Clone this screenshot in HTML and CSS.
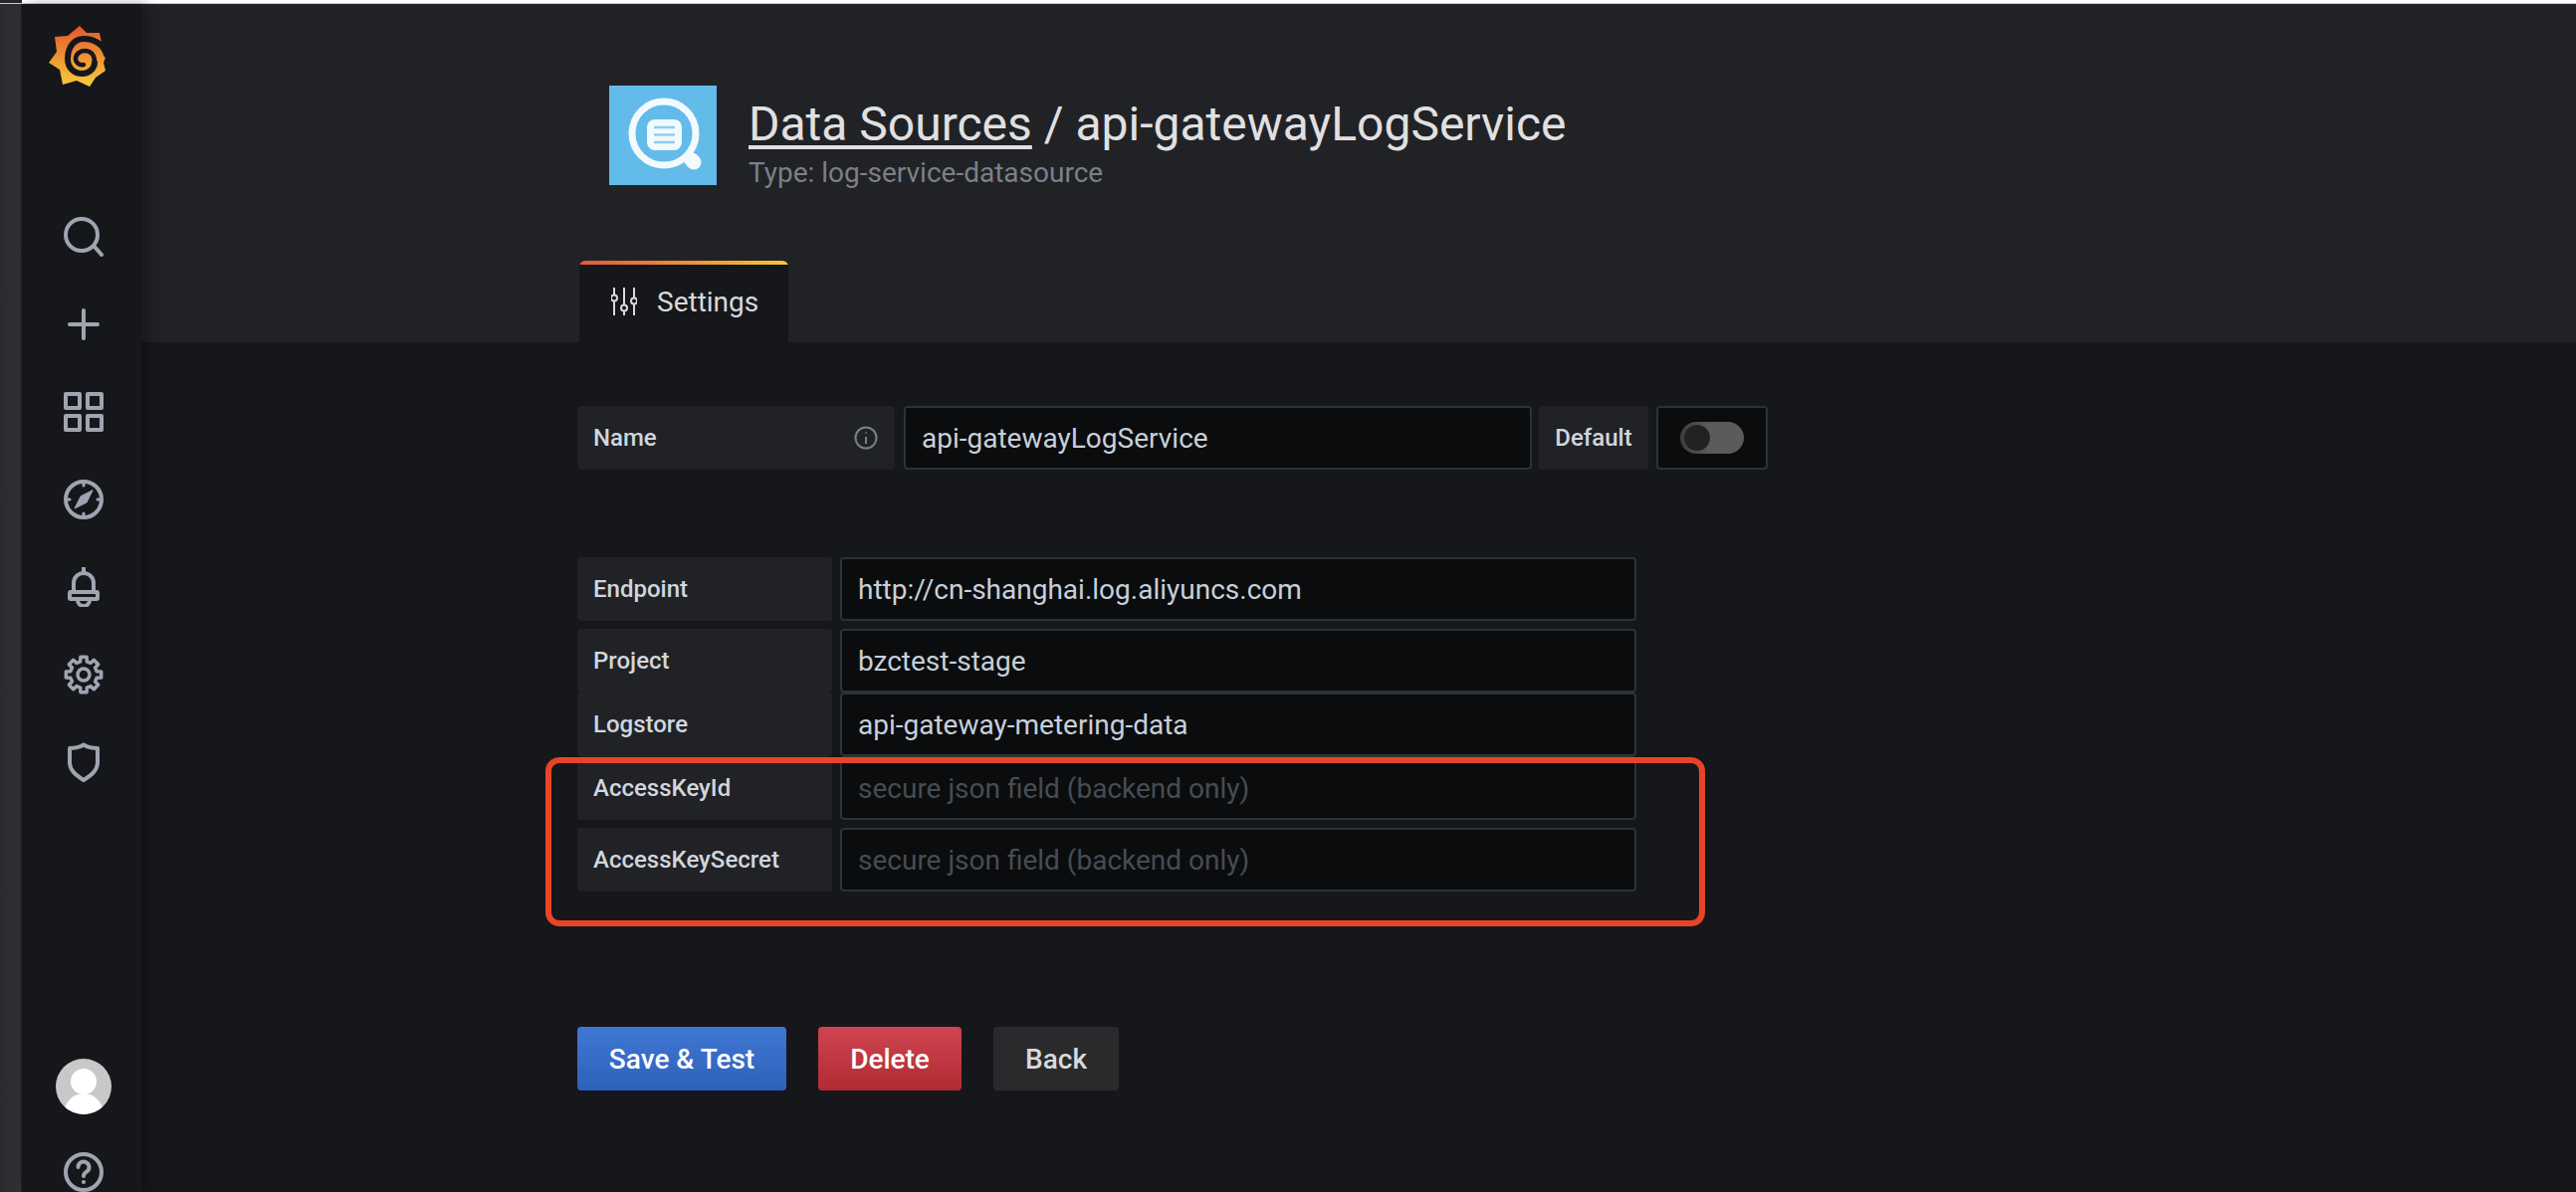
FILE: index.html
```html
<!DOCTYPE html>
<html lang="en">
<head>
  <meta charset="UTF-8" />
  <title>Data Sources / api-gatewayLogService</title>
  <link rel="stylesheet" href="styles.css">
</head>
<body>
  <div class="topline"></div>
  <div class="app">
    <div class="edge"></div>

    <nav class="sidebar">
      <div class="logo">
        <svg width="60" height="64" viewBox="0 0 60 64">
          <defs>
            <linearGradient id="sun" x1="0" y1="0" x2="0" y2="1">
              <stop offset="0" stop-color="#e2582f" />
              <stop offset="1" stop-color="#f8cc3a" />
            </linearGradient>
          </defs>
          <polygon fill="url(#sun)" points="31,1 38,8 51,8 53,18 58,30 55,38 57,46 47,53 41,62 28,56 14,60 11,45 0,38 8,27 6,12 19,11" />
          <path class="spiral" d="M58 30 C55 19 45 14 35 14 C25 14 19 23 19 34 C19 44 26 49 34 49 C40 49 46 44 46 38" />
          <path class="spiral thin" d="M46 37 C46 30 42 26 36 26 C31 26 27 30 27 34 C27 38 31 41 35 40" />
        </svg>
      </div>

      <a class="nav-item"><svg class="nav-icon" viewBox="0 0 40 40"><circle cx="18" cy="18" r="16" /><line x1="31" y1="30" x2="38" y2="38" /></svg></a>
      <a class="nav-item"><svg class="nav-icon" viewBox="0 0 40 40"><line x1="6" y1="20" x2="34" y2="20" /><line x1="20" y1="6" x2="20" y2="34" /></svg></a>
      <a class="nav-item"><svg class="nav-icon" viewBox="0 0 40 40"><rect x="2" y="2" width="14" height="14" /><rect x="24" y="2" width="14" height="14" /><rect x="2" y="24" width="14" height="14" /><rect x="24" y="24" width="14" height="14" /></svg></a>
      <a class="nav-item"><svg class="nav-icon" viewBox="0 0 40 40"><circle cx="20" cy="20" r="18" /><path class="ticks" d="M20 3v3M20 34v3M3 20h3M34 20h3" /><path class="solid" d="M29 11 L23 23 L11 29 L17 17 Z" /></svg></a>
      <a class="nav-item"><svg class="nav-icon" viewBox="0 0 40 40"><path d="M20 1v4M10 25V16a10 10 0 0 1 20 0v9" /><rect x="6" y="25" width="28" height="7" rx="1" /><path d="M14 33a6 6 0 0 0 12 0" /></svg></a>
      <a class="nav-item"><svg class="nav-icon gear" viewBox="0 0 40 40"><polygon points="16.7,6.9 16.9,2.3 23.1,2.3 23.3,6.9 27,8.4 30.3,5.3 34.7,9.7 31.6,13 33.1,16.7 37.7,16.9 37.7,23.1 33.1,23.3 31.6,27 34.7,30.3 30.3,34.7 27,31.6 23.3,33.1 23.1,37.7 16.9,37.7 16.7,33.1 13,31.6 9.7,34.7 5.3,30.3 8.4,27 6.9,23.3 2.3,23.1 2.3,16.9 6.9,16.7 8.4,13 5.3,9.7 9.7,5.3 13,8.4" /><circle cx="20" cy="20" r="6" /></svg></a>
      <a class="nav-item"><svg class="nav-icon" viewBox="0 0 40 40"><path d="M6 6 C11 6 16 5 20 2.500 C24 5 29 6 34 6 V20 C34 28 28 33 20 38 C12 33 6 28 6 20 Z" /></svg></a>

      <div class="nav-spacer"></div>

      <a class="nav-item avatar-item">
        <svg width="56" height="56" viewBox="0 0 56 56">
          <clipPath id="round"><circle cx="28" cy="28" r="28" /></clipPath>
          <g clip-path="url(#round)">
            <rect width="56" height="56" fill="#c8c8c8" />
            <circle cx="28" cy="23" r="13" fill="#fff" />
            <ellipse cx="28" cy="56" rx="20" ry="21" fill="#fff" />
          </g>
        </svg>
      </a>
      <a class="nav-item help-item"><svg class="nav-icon" viewBox="0 0 40 40"><circle cx="20" cy="20" r="18" /><path d="M14.500 15a5.500 5.500 0 1 1 8.500 4.600c-2 1.300-3 2-3 4.400" /><path d="M20 30v0.100" /></svg></a>
    </nav>

    <main class="main">
      <header class="page-header">
        <div class="title-row">
          <svg class="ds-icon" width="108" height="100" viewBox="0 0 108 100">
            <rect width="108" height="100" fill="#63bbea" />
            <circle cx="55" cy="48" r="32" fill="none" stroke="#f2fafe" stroke-width="7" />
            <line x1="83" y1="75" x2="85" y2="77" stroke="#f2fafe" stroke-width="15" stroke-linecap="round" />
            <rect x="38" y="34" width="35" height="31" rx="8" fill="#f2fafe" />
            <path d="M45 42h21M45 49.500h21M45 57h21" stroke="#8fcdef" stroke-width="2.500" />
          </svg>
          <div class="title-text">
            <h1 class="page-title"><a class="crumb">Data Sources</a> / api-gatewayLogService</h1>
            <div class="page-sub">Type: log-service-datasource</div>
          </div>
        </div>
        <div class="tabs">
          <div class="tab">
            <svg class="tab-icon" width="26" height="28" viewBox="0 0 26 28">
              <path d="M3 0v7M3 14v14M13 0v17M13 24v4M23 0v10M23 17v11" />
              <circle cx="3" cy="10.500" r="3" />
              <circle cx="13" cy="20.500" r="3" />
              <circle cx="23" cy="13.500" r="3" />
            </svg>
            <span>Settings</span>
          </div>
        </div>
      </header>

      <section class="content">
        <div class="name-row">
          <div class="label label-name"><span>Name</span>
            <svg width="24" height="24" viewBox="0 0 24 24" class="info-icon"><circle cx="12" cy="12" r="10.500" /><path d="M12 11v7M12 6.500v1" /></svg>
          </div>
          <div class="field field-name">api-gatewayLogService</div>
          <div class="label label-default">Default</div>
          <div class="field field-switch"><div class="switch"><div class="knob"></div></div></div>
        </div>

        <div class="rows">
          <div class="row"><div class="label label-row">Endpoint</div><div class="field field-row">http://cn-shanghai.log.aliyuncs.com</div></div>
          <div class="row tight"><div class="label label-row">Project</div><div class="field field-row">bzctest-stage</div></div>
          <div class="row tight"><div class="label label-row">Logstore</div><div class="field field-row">api-gateway-metering-data</div></div>
          <div class="row"><div class="label label-row">AccessKeyId</div><div class="field field-row placeholder">secure json field (backend only)</div></div>
          <div class="row"><div class="label label-row">AccessKeySecret</div><div class="field field-row placeholder">secure json field (backend only)</div></div>
          <div class="annotation"></div>
        </div>

        <div class="actions">
          <button class="btn btn-save">Save &amp; Test</button>
          <button class="btn btn-delete">Delete</button>
          <button class="btn btn-back">Back</button>
        </div>
      </section>
    </main>
  </div>
</body>
</html>
```

FILE: styles.css
```css
* {
  box-sizing: border-box;
}

html, body {
  height: 100%;
}

body {
  margin: 0;
  background: #16171b;
  font-family: 'Roboto', 'Liberation Sans', sans-serif;
  color: #c7d0d9;
  overflow: hidden;
}

.topline {
  height: 4px;
  background: linear-gradient(to right, #26272a 22px, #fff 22px);
  border-bottom: 1px solid #c9cacc;
}

.app {
  display: flex;
  height: 1194px;
}

.edge {
  width: 22px;
  background: linear-gradient(to right, #2a2b2f, #303136);
  border-right: 1px solid #232427;
}

/* Sidebar */
.sidebar {
  width: 120px;
  background: #16171b;
  display: flex;
  flex-direction: column;
  box-shadow: 6px 0 14px rgba(0, 0, 0, 0.3);
  z-index: 2;
}

.logo {
  height: 190px;
  padding: 21px 0 0 27px;
}

.spiral {
  fill: none;
  stroke: #16171b;
  stroke-width: 6;
  stroke-linecap: round;
}

.spiral.thin {
  stroke-width: 4.500;
}

.nav-item {
  height: 88px;
  display: flex;
  align-items: center;
  justify-content: center;
  padding-left: 4px;
}

.nav-spacer {
  flex: 1;
}

.avatar-item {
  height: 84px;
}

.help-item {
  height: 40px;
  margin-top: 24px;
}

.nav-icon {
  width: 40px;
  height: 40px;
  fill: none;
  stroke: #9fa5b0;
  stroke-width: 4;
  stroke-linecap: round;
  stroke-linejoin: round;
}

.nav-icon .solid {
  fill: #9fa5b0;
  stroke-width: 1;
}

.nav-icon .ticks {
  stroke-width: 3;
}

.nav-icon.gear {
  stroke-width: 3.500;
}

/* Main */
.main {
  flex: 1;
  display: flex;
  flex-direction: column;
}

.page-header {
  height: 340px;
  background: #212226;
  padding: 82px 0 0 440px;
  display: flex;
  flex-direction: column;
}

.title-row {
  display: flex;
  margin-left: 30px;
  height: 100px;
}

.ds-icon {
  flex-shrink: 0;
}

.title-text {
  margin-left: 32px;
}

.page-title {
  margin: 12px 0 6px;
  font-size: 48px;
  line-height: 54px;
  font-weight: 400;
  color: #e0e0e1;
}

.crumb {
  text-decoration: underline;
  text-decoration-thickness: 4px;
  text-underline-offset: 5px;
}

.page-sub {
  font-size: 28px;
  line-height: 32px;
  color: #7b8087;
}

.tabs {
  margin-top: 76px;
  display: flex;
}

.tab {
  width: 210px;
  height: 82px;
  background: linear-gradient(to right, #e0593a, #f6c636) top / 100% 4px no-repeat, #16171b;
  border-radius: 6px 6px 0 0;
  display: flex;
  align-items: center;
  padding-left: 32px;
  font-size: 28px;
  color: #d8d9da;
}

.tab-icon {
  margin-right: 20px;
  fill: none;
  stroke: #d8d9da;
  stroke-width: 2;
}

/* Form */
.content {
  padding: 64px 0 0 438px;
}

.name-row {
  display: flex;
}

.label {
  height: 64px;
  background: #212226;
  border-radius: 4px;
  display: flex;
  align-items: center;
  font-size: 24px;
  font-weight: 500;
  color: #d0d6de;
}

.label-name {
  width: 319px;
  padding: 0 17px 0 16px;
  justify-content: space-between;
}

.info-icon {
  fill: none;
  stroke: #7b8087;
  stroke-width: 2;
}

.label-default {
  width: 110px;
  margin-left: 7px;
  justify-content: center;
}

.label-row {
  width: 256px;
  padding-left: 16px;
}

.field {
  height: 64px;
  background: #0b0c0e;
  border: 2px solid #2c3235;
  border-radius: 4px;
  display: flex;
  align-items: center;
  padding-left: 16px;
  font-size: 28px;
  color: #c7d0d9;
}

.field-name {
  width: 631px;
  margin-left: 9px;
}

.field-switch {
  width: 112px;
  margin-left: 8px;
  padding-left: 22px;
}

.switch {
  width: 64px;
  height: 32px;
  border-radius: 16px;
  background: linear-gradient(to right, #3c3c3e, #5b5b5b 45%);
  padding: 3px 0 0 4px;
}

.knob {
  width: 26px;
  height: 26px;
  border-radius: 50%;
  background: #222224;
}

.rows {
  position: relative;
  margin-top: 88px;
}

.row {
  display: flex;
  margin-bottom: 8px;
}

.row.tight {
  margin-bottom: 0;
}

.field-row {
  width: 800px;
  margin-left: 8px;
}

.placeholder {
  color: #464c54;
}

/* the red box someone drew on the screenshot */
.annotation {
  position: absolute;
  left: -32px;
  top: 201px;
  width: 1165px;
  height: 170px;
  border: 6px solid #e94427;
  border-radius: 14px;
}

.actions {
  display: flex;
  gap: 32px;
  margin-top: 136px;
}

.btn {
  height: 64px;
  border: none;
  border-radius: 4px;
  font-family: inherit;
  font-size: 28px;
  font-weight: 500;
  color: #fff;
  cursor: pointer;
}

.btn-save {
  width: 210px;
  background: linear-gradient(to bottom, #3f77d4, #2e61ba);
}

.btn-delete {
  width: 144px;
  background: linear-gradient(to bottom, #d04450, #b02b32);
}

.btn-back {
  width: 126px;
  background: #2a2a2c;
  color: #d8d9da;
}
```
